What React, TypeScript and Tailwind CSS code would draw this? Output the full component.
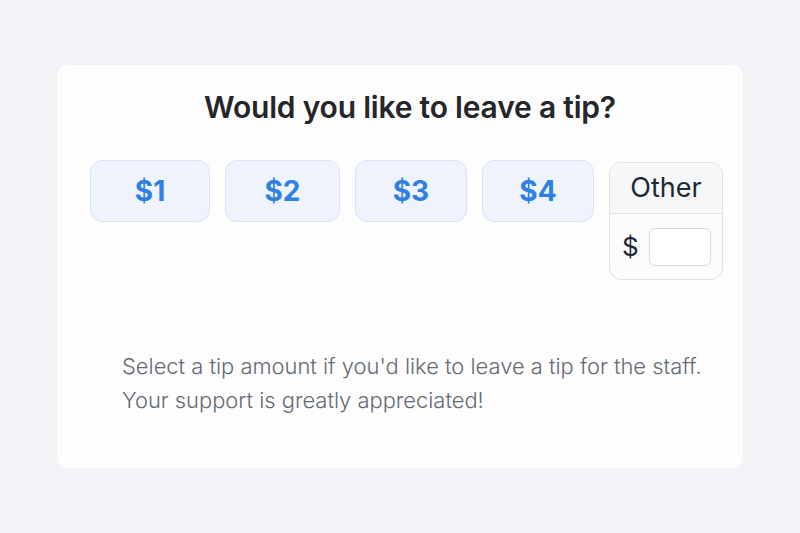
export default function App() {
  const amounts = [
    { label: "$1", w: "w-[120px]" },
    { label: "$2", w: "w-[115px]" },
    { label: "$3", w: "w-[112px]" },
    { label: "$4", w: "w-[112px]" },
  ];

  return (
    <div
      className="flex h-[533px] w-[800px] items-center justify-center bg-[#f3f4f7]"
      style={{ fontFamily: "Inter, 'Noto Sans', sans-serif" }}
    >
      <div className="flex h-[403px] w-[686px] flex-col rounded-[10px] bg-[#fdfdfe] pt-[25px] shadow-[0_0_2px_rgba(0,0,0,0.03)]">
        <h1 className="pl-[20px] text-center text-[30px] leading-[34px] font-semibold tracking-[-0.2px] text-[#252629]">
          Would you like to leave a tip?
        </h1>

        <div className="mt-[36px] flex items-start gap-[15px] pl-[33px]">
          {amounts.map((a) => (
            <button
              key={a.label}
              className={`${a.w} flex h-[62px] items-center justify-center rounded-[12px] border border-[#d9e3f6] bg-[#eef3fd] text-[28px] font-bold text-[#2f80e3]`}
            >
              {a.label}
            </button>
          ))}

          <div className="mt-[2px] flex w-[114px] flex-col overflow-hidden rounded-[12px] border border-[#dfe2e6] bg-[#fcfcfd]">
            <div className="flex h-[51px] items-center justify-center border-b border-[#dfe2e6] bg-[#f6f7f9] text-[27px] text-[#1d2a36]">
              Other
            </div>
            <div className="flex h-[65px] items-center gap-[10px] pl-[12px]">
              <span className="text-[26px] text-[#1d2a36]">$</span>
              <input className="h-[38px] w-[62px] rounded-[6px] border border-[#d6d9de] bg-white outline-none" />
            </div>
          </div>
        </div>

        <p className="mt-[69px] pl-[65px] text-[21.9px] leading-[34px] font-light text-[#666a72]">
          Select a tip amount if you'd like to leave a tip for the staff.
          <br />
          Your support is greatly appreciated!
        </p>
      </div>
    </div>
  );
}
